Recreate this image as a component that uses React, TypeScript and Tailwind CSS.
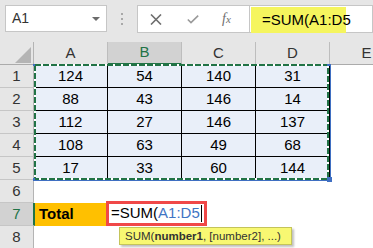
import React from "react";

const data = [
  [124, 54, 140, 31],
  [88, 43, 146, 14],
  [112, 27, 146, 137],
  [108, 63, 49, 68],
  [17, 33, 60, 144],
];
const cols = ["A", "B", "C", "D", "E"];

function RowHeader({ n, selected }: { n: number; selected?: boolean }) {
  return selected ? (
    <div className="w-[35px] h-[23px] shrink-0 bg-[#d2d2d2] border-r-2 border-r-[#217346] border-b border-b-[#c6c6c6] flex items-center justify-center text-[#217346]">
      {n}
    </div>
  ) : (
    <div className="w-[34px] h-[23px] shrink-0 bg-[#e6e6e6] border-r border-r-[#b4b4b4] border-b border-b-[#c6c6c6] flex items-center justify-center text-[#333]">
      {n}
    </div>
  );
}

export default function App() {
  return (
    <div className="relative w-[373px] h-[248px] overflow-hidden bg-white text-[15px] text-black font-[family-name:'Liberation_Sans',Arial,sans-serif]">
      {/* Formula bar */}
      <div className="h-[42px] bg-[#e6e6e6] flex items-start pt-[5px] pl-[5px]">
        <div className="w-[102px] h-[27px] bg-white border border-[#c6c6c6] flex items-center justify-between pl-[6px] pr-[6px] text-[14px] text-[#333]">
          <span>A1</span>
          <svg width="8" height="4" viewBox="0 0 8 4">
            <path d="M0 0 L8 0 L4 4 Z" fill="#6b6b6b" />
          </svg>
        </div>
        <div className="w-[30px] h-[27px] flex flex-col items-center justify-center gap-[3px]">
          <div className="w-[2px] h-[2px] bg-[#a8a8a8]" />
          <div className="w-[2px] h-[2px] bg-[#a8a8a8]" />
          <div className="w-[2px] h-[2px] bg-[#a8a8a8]" />
        </div>
        <div className="w-[113px] h-[28px] bg-white border border-[#c6c6c6] flex items-center">
          <svg className="ml-[12px]" width="12" height="11" viewBox="0 0 12 11">
            <path d="M1 0.5 L11 10.5 M11 0.5 L1 10.5" stroke="#6e6e6e" strokeWidth="1.6" />
          </svg>
          <svg className="ml-[25px]" width="12" height="9" viewBox="0 0 12 9">
            <path d="M0.8 4.5 L4 7.6 L11.2 0.6" stroke="#9a9a9a" strokeWidth="1.6" fill="none" />
          </svg>
          <span className="ml-[23px] text-[14px] italic text-[#6e6e6e] font-[family-name:'Liberation_Serif',serif] leading-none">
            f<span className="text-[11px]">x</span>
          </span>
        </div>
        <div className="flex-1 h-[28px] bg-white border border-l-0 border-[#c6c6c6] pt-[1px]">
          <div className="ml-[1px] w-[95px] h-[26px] bg-[#f5f55e] pl-[11px] leading-[26px] text-black">
            =SUM(A1:D5
          </div>
        </div>
      </div>

      {/* Column headers */}
      <div className="flex h-[23px]">
        <div className="w-[34px] h-[23px] shrink-0 bg-[#e6e6e6] border-r border-r-[#b4b4b4] border-b border-b-[#ababab] flex items-end justify-end pr-[2px] pb-[1px]">
          <svg width="16" height="16" viewBox="0 0 16 16">
            <path d="M16 0 L16 16 L0 16 Z" fill="#b4b4b4" />
          </svg>
        </div>
        {cols.map((c) =>
          c === "B" ? (
            <div
              key={c}
              className="w-[74px] h-[23px] shrink-0 bg-[#d2d2d2] border-r border-r-[#bdbdbd] border-b-2 border-b-[#217346] flex items-center justify-center text-[#217346]"
            >
              {c}
            </div>
          ) : (
            <div
              key={c}
              className="w-[74px] h-[23px] shrink-0 bg-[#e6e6e6] border-r border-r-[#bdbdbd] border-b border-b-[#ababab] flex items-center justify-center text-[#333]"
            >
              {c}
            </div>
          )
        )}
      </div>

      {/* Data rows */}
      {data.map((row, i) => (
        <div key={i} className="flex h-[23px]">
          <RowHeader n={i + 1} />
          {row.map((v, j) => (
            <div
              key={j}
              className="w-[74px] h-[23px] shrink-0 bg-[#e9eff9] border-r border-b border-black flex items-center justify-center"
            >
              {v}
            </div>
          ))}
          <div className="w-[74px] h-[23px] shrink-0 bg-white" />
        </div>
      ))}

      {/* Row 6 */}
      <div className="flex h-[23px]">
        <RowHeader n={6} />
        <div className="flex-1 bg-white" />
      </div>
      {/* Row 7 */}
      <div className="flex h-[23px]">
        <RowHeader n={7} selected />
        <div className="w-[73px] h-[23px] shrink-0 bg-[#ffc000] flex items-center pl-[4px] font-bold">
          Total
        </div>
        <div className="flex-1 bg-white" />
      </div>
      {/* Row 8 */}
      <div className="flex h-[23px]">
        <RowHeader n={8} />
        <div className="flex-1 bg-white" />
      </div>

      {/* Marching ants / range highlight */}
      <svg className="absolute left-0 top-0 pointer-events-none" width="373" height="248" viewBox="0 0 373 248">
        <line x1="330.5" y1="65" x2="330.5" y2="181" stroke="#3f6fc2" strokeWidth="1" />
        <line x1="33" y1="180.5" x2="331" y2="180.5" stroke="#3f6fc2" strokeWidth="1" />
        <rect x="35" y="65" width="293" height="114" fill="none" stroke="#ffffff" strokeWidth="2" />
        <rect x="35" y="65" width="293" height="114" fill="none" stroke="#217346" strokeWidth="2" strokeDasharray="6 2" />
        <rect x="33" y="64" width="2" height="2" fill="#3f6fc2" />
        <rect x="327" y="64" width="4" height="2" fill="#3f6fc2" />
        <rect x="33" y="178" width="2" height="2" fill="#3f6fc2" />
        <rect x="327" y="177" width="5" height="5" fill="#3f6fc2" stroke="#ffffff" strokeWidth="0" />
      </svg>

      {/* In-cell editor */}
      <div className="absolute left-[106px] top-[201px] w-[101px] h-[25px] bg-white border-[3px] border-[#f04848] flex items-center pl-[2px]">
        <span className="text-black">=SUM(</span>
        <span className="text-[#3f75c4]">A1:D5</span>
        <span className="w-px h-[17px] bg-black ml-[1px]" />
      </div>

      {/* Tooltip */}
      <div className="absolute left-[119px] top-[227px] w-[173px] h-[18px] bg-[#f8f872] border border-[#c4c45a] shadow-[2px_2px_2px_rgba(0,0,0,0.25)] pl-[5px] text-[11.5px] leading-[16px] text-[#333] whitespace-nowrap">
        SUM(<span className="font-bold">number1</span>, [number2], ...)
      </div>
    </div>
  );
}
